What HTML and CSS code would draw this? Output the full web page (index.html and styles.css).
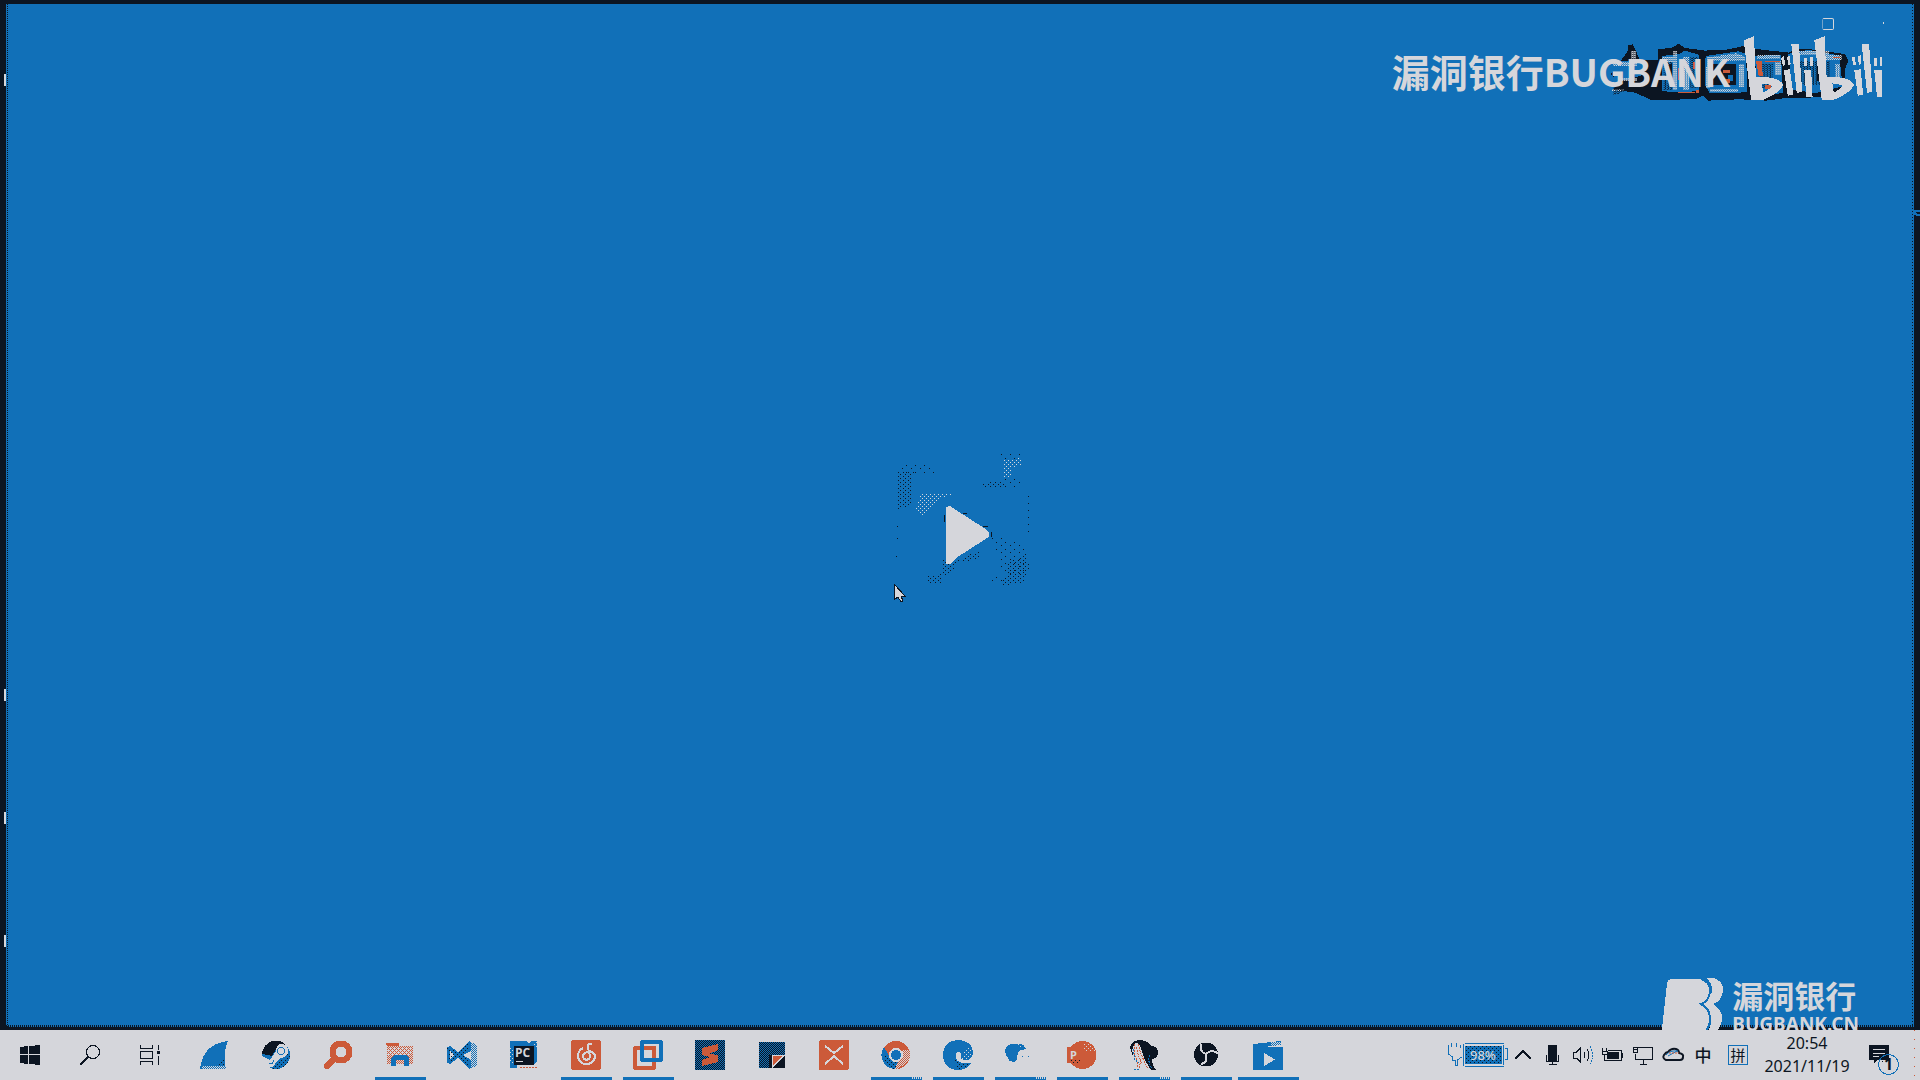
FILE: index.html
```html
<!DOCTYPE html>
<html lang="zh-CN">
<head>
<meta charset="utf-8">
<title>漏洞银行BUGBANK</title>
<link rel="stylesheet" href="styles.css">
</head>
<body>
<svg class="defs" width="0" height="0" aria-hidden="true">
  <defs>
    <pattern id="dark-dots" width="4" height="4" patternUnits="userSpaceOnUse"><path class="dark" d="M0 0h1v1H0zM2 2h1v1H2z"/></pattern>
    <pattern id="dark-dense" width="2" height="2" patternUnits="userSpaceOnUse"><path class="dark" d="M0 0h1v1H0zM1 1h1v1H1z"/></pattern>
    <pattern id="light-dots" width="4" height="4" patternUnits="userSpaceOnUse"><path class="light" d="M1 0h1v1H1zM3 2h1v1H3z"/></pattern>
    <pattern id="light-dense" width="2" height="2" patternUnits="userSpaceOnUse"><path class="light" d="M0 0h1v1H0zM1 1h1v1H1z"/></pattern>
    <pattern id="dark-big" width="15" height="12" patternUnits="userSpaceOnUse"><path class="dark" d="M0 0h3v3H0zM9 6h3v3H9z"/></pattern>
    <pattern id="dark-sparse" width="27" height="21" patternUnits="userSpaceOnUse"><path class="dark" d="M0 0h3v3H0zM15 9h3v3h-3z"/></pattern>
    <pattern id="light-big" width="12" height="12" patternUnits="userSpaceOnUse"><path class="light" d="M0 0h3v3H0zM6 6h3v3H6z"/></pattern>
    <pattern id="light-mesh" width="6" height="6" patternUnits="userSpaceOnUse"><path class="light" d="M0 0h3v3H0zM3 3h3v3H3z"/></pattern>
    <pattern id="dark-mesh" width="9" height="6" patternUnits="userSpaceOnUse"><path class="dark" d="M0 0h3v3H0zM5 3h3v3H5z"/></pattern>
  </defs>
</svg>

<main class="desktop">
  <section class="window" aria-label="视频"></section>

  <i class="mark mark-a"></i>
  <i class="mark mark-b"></i>
  <i class="mark mark-c"></i>
  <i class="mark mark-d"></i>
  <svg class="fish" viewBox="0 0 7 9"><path class="line-blue thick" d="M0 2l4 5h3M0 7l3-4h4"/></svg>

  <svg class="badge-art" viewBox="660 90 840 210" aria-hidden="true">
    <path class="dark" d="M720 150v-16l14-2 20 44 54 2V146l40-4 20-12 16 12 60 8 60-2 76-16 4 12 50 6 56 6 24-12 60 4 50 8 28 4 10 20-8 22-6 74-34 10-130 2-60 8-80-4-90 4-16-14-20 10-130 2-50-22-64-8 20-16-24-30 20-26z"/>
    <path class="blue" d="M672 184l34-4 46 4 20 8-6 28-34 12-50 10-10 38h-4v-18l12-20z"/>
    <path class="blue" d="M818 166l50-6 18-10 40 12v104l-44 8-62-6z"/>
    <path class="blue" d="M946 166l96-14 22 8 4 112-110 2-14-24z"/>
    <path class="blue" d="M1084 166l82-4 6 112-70 8-20-20zM1186 160l60-12 90 16 10 90-80 20-80-12z"/>
    <path fill="url(#light-mesh)" d="M676 182h70v12h-70zM728 150h14v30h-14zM820 170h40v12h-40zM850 150h12v116h-12zM880 168h18v96h-18zM950 170l86-12 24 10v12H960v80h-14zM1044 190h14v66h-14zM1096 162h68v12h-68zM1150 180h16v40h-16zM1206 150h100v14h-100zM1290 164h54v14h-54zM1324 190h14v46h-14zM672 262h36v6h-36zM700 230h46v10h-46zM960 262h80v8h-80z"/>
    <path fill="url(#dark-mesh)" d="M676 250l50-14v26l-50 20zM822 184h26v80h-26zM902 168h22v90h-22zM1104 190h40v70h-40zM1220 180h90v70h-90z"/>
    <path class="dark" d="M968 190h66v60h-66zM1072 196h20v40h-20zM1178 170h14v76h-14zM1270 190h12v50h-12zM840 190h8v60h-8z"/>
    <path class="blue" d="M980 200h12v16h-12zM1012 220h14v20h-14z"/>
    <path class="orange" d="M1093 180h17l3 44h-12zM996 208h20v6h-20zM998 234h18v10h-18zM1120 180h42v4h-42zM866 270h50v4h-50zM918 264h9v9h-9zM1318 168h20v4h-20zM866 200h4v36h-4zM910 184h4v20h-4zM1120 250h16v12h-16zM1214 180h4v10h-4z"/>
  </svg>
  <p class="watermark">漏洞银行BUGBANK</p>
  <svg class="bili" viewBox="660 90 840 210" role="img" aria-label="bilibili">
    <g class="light">
      <path d="M1057 120l30-12 6 118q70 0 80 24-10 24-60 44h-34zM1110 246l4 26q18-8 26-18-10-8-30-8z" fill-rule="evenodd"/>
      <path d="M1263 120l30-12 6 118q70 0 80 24-10 24-60 44h-34zM1316 246l4 26q18-8 26-18-10-8-30-8z" fill-rule="evenodd"/>
      <path d="M1166 172l8-6 5 26-7 2zM1184 168l8-4 2 26-7 2zM1174 208l18-4 10 74-16 4zM1196 130h22l10 140-16 4zM1234 172l8-2v24h-8zM1250 168h8v26h-8zM1234 208h20l4 76h-18z"/>
      <path d="M1372 172l8-6 5 26-7 2zM1390 168l8-4 2 26-7 2zM1380 208l18-4 8 74-16 4zM1401 130h22l10 140-16 4zM1438 172l8-2v24h-8zM1454 168h8v26h-8zM1438 208h22l2 76h-16z"/>
    </g>
    <path class="light" d="M1463 66h3v6h-3z"/>
  </svg>
  <button class="restore" aria-label="还原"></button>

  <button class="play" aria-label="播放">
    <svg viewBox="-15 -30 570 570">
      <path fill="url(#dark-big)" d="M84 125l68-3-30 18v84l-42 18zM324 162l80-10v20l-60 4zM222 374l10 30 44-20 50-22v28l-60 4-30 44h-28zM168 440l50-6v24h-50zM410 400l60-30 8 40-18 50-60 6-14 0 30-34z"/>
      <path fill="url(#dark-sparse)" d="M84 102h84l50 30H84zM380 66h80v20h-80zM400 148h56v28h-56zM470 180h12v140h-12zM360 320h50l60 30v90h-70zM336 456l40-16 20-8v20z"/>
      <path class="dark" d="M222 256h3v20h-3zM81 288h3v3h-3zM81 324h3v3h-3zM78 378h3v3h-3zM278 250h14v3h-14zM340 288h14v3h-14zM362 306h3v16h-3z"/>
      <path fill="url(#light-big)" d="M402 88l54-4v24l-30 4v30h-26zM150 192l106-3-50 20-48 45-24-12z"/>
      <path class="light" d="M228 232l12-4 18 12 99 66v18l-99 78-18 20h-12z" visibility="hidden"/>
      <path class="light" d="M228 232l12-4 18 12 84 54 15 12v15l-15 9-84 54-18 18h-12z"/>
    </svg>
  </button>
  <svg class="cursor" viewBox="0 0 13 20"><path class="pointer" d="M1 1v16l4-3 3 5 2-1-2-5h4z"/></svg>

  <div class="brand">
    <svg class="brand-logo" viewBox="0 0 66 60" aria-hidden="true">
      <path class="light" d="M1 60L7 5q1-4 5-4h28q12 2 11 15-1 11-11 10 11 4 9 18-2 12-8 16z"/>
      <path class="light" d="M46 0h8q10 4 9 13-1 10-10 13 10 6 9 16-2 11-13 18h-9q12-8 11-18 0-12-8-16 8-4 9-13 0-9-6-13z"/>
      <path class="line-split" d="M41 1q10 3 9 13-1 9-9 12 9 5 9 15 0 10-9 17"/>
    </svg>
    <div class="brand-text">
      <p class="brand-name">漏洞银行</p>
      <p class="brand-site">BUGBANK.CN</p>
    </div>
  </div>
</main>

<footer class="taskbar">
  <nav class="shell">
    <button aria-label="开始"><svg viewBox="0 0 30 30"><path class="dark" d="M5 7l8-1v8H5zM14 6l11-1v9H14zM5 15h8v9l-8-1zM14 15h11v10l-11-1z"/></svg></button>
    <button aria-label="搜索"><svg viewBox="0 0 30 30"><circle class="line-dark" cx="18" cy="12" r="6.500"/><path class="line-dark thick" d="M13 17l-8 8"/></svg></button>
    <button aria-label="任务视图"><svg viewBox="0 0 30 30"><path class="line-dark" d="M5.500 5v3.500h12V5M5.500 11.500h12v7h-12zM5.500 25v-3.500h12V25M23.500 5v5M23.500 16v9"/><path class="dark" d="M22 11h3v3h-3z"/></svg></button>
  </nav>
  <nav class="apps">
    <button aria-label="Wireshark"><svg viewBox="0 0 30 30"><path class="blue" d="M1 29C3 12 12 3 29 1c-4 8-4 18-2 28z"/><path fill="url(#light-dense)" d="M3 26h24v3H3z"/><path fill="url(#dark-dots)" d="M24 17l3 9H17z"/></svg></button>
    <button aria-label="Steam"><svg viewBox="0 0 30 30"><circle class="blue" cx="15" cy="15" r="14"/><path class="dark" d="M1 14A14 14 0 0 1 26 6q-8-4-11 3l-4 7z"/><path fill="url(#dark-dots)" d="M29 15A14 14 0 0 1 8 27l10-6 8-4V6z"/><path class="light" d="M1 16l8 4 6-9q0-7 6-7 6 1 6 7t-7 7l-6 5q-1 5-5 4-4 0-5-4l-4-2z"/><circle class="line-blue" cx="20" cy="11" r="3.500"/><path class="line-blue" d="M8 23q5 2 4-3"/></svg></button>
    <button aria-label="Everything"><svg viewBox="0 0 30 30"><circle class="ring" cx="18" cy="12" r="8.500"/><path class="ring-handle" d="M11 19l-7 7"/></svg></button>
    <button class="open" aria-label="文件资源管理器"><svg viewBox="0 0 30 30"><path class="orange" d="M1 3h13v3H2z"/><path class="orange" d="M2 6h26v18H2z"/><path fill="url(#light-dense)" d="M2 6h26v18H2z"/><path fill="url(#light-dots)" d="M3 7h24v8H3z"/><path class="blue" d="M6 26V18l3-3h12l3 3v8h-5v-6h-8v6z"/></svg></button>
    <button aria-label="Visual Studio"><svg viewBox="0 0 30 30"><path class="blue" d="M0 7l3-1 8 6L22 1l2 1v9l-8 4 8 5v8l-2 1-11-11-8 6-3-1zM3 11v8l4-4z" fill-rule="evenodd"/><path fill="url(#dark-dots)" d="M11 12L22 1v10l-6 4 6 5v9L11 18 3 24 0 7z"/><path class="blue" d="M24 2l6 3v20l-6 4z"/><path fill="url(#light-dense)" d="M24 2l6 3v20l-6 4z"/></svg></button>
    <button aria-label="PyCharm"><svg viewBox="0 0 30 30"><path class="blue" d="M1 1h16l3 3 2-3h6v20l-3 3H8v4H1z"/><path fill="url(#light-dots)" d="M1 8h4v16H1zM24 1h4v6h-4z"/><path class="dark" d="M5 6h20v19H5z"/><text class="pc-text" x="6" y="17">PC</text><path class="light" d="M7 21h7v1H7z"/><path class="line-orange dashed" d="M11 27.500h17"/></svg></button>
    <button class="open" aria-label="网易云音乐"><svg viewBox="0 0 30 30"><rect class="orange" width="30" height="30" rx="3"/><path class="line-light" d="M21 4q-5-1-4 4l2 8a3.500 3.500 0 1 1-5-3q6-4 10 2a8.500 8.500 0 1 1-12-7"/></svg></button>
    <button class="open" aria-label="VMware"><svg viewBox="0 0 30 30"><rect class="frame frame-orange" x="2" y="8" width="19" height="20" rx="1"/><rect class="frame frame-blue" x="9" y="2" width="19" height="18" rx="1"/><path class="orange" d="M12 6h11v4H12zM19 8h4v7h-4z"/></svg></button>
    <button aria-label="Sublime Text"><svg viewBox="0 0 30 30"><path class="blue" d="M0 0h30v30H0z"/><path fill="url(#dark-dense)" d="M0 0h30v30H0z"/><path class="orange" d="M7 8l16-4v6l-9 4 9 1v7L7 26v-6l8-3-8-2z"/></svg></button>
    <button aria-label="编辑器"><svg viewBox="0 0 30 30"><path class="blue" d="M2 2h26v26H2z"/><path fill="url(#dark-dense)" d="M2 2h26v26H2z"/><path class="dark" d="M12 15h16v13H12z"/><path class="light" d="M15 15h13L15 28z"/><path class="orange" d="M16 16h9l-9 9z"/></svg></button>
    <button aria-label="XMind"><svg viewBox="0 0 30 30"><rect class="orange" width="30" height="30" rx="2"/><path class="line-light" d="M6 6l9 7 9-7M6 24l9-8 9 8"/></svg></button>
    <button class="open stacked" aria-label="Chrome"><svg viewBox="0 0 30 30"><circle class="orange" cx="15" cy="15" r="14"/><path fill="url(#light-dense)" d="M21 10h8v10L17 29h-3z"/><path class="blue" d="M3 7l6 10 8 5-3 7A14 14 0 0 1 3 7z"/><path fill="url(#dark-dots)" d="M3 12l7 9 7 1-3 7A14 14 0 0 1 3 12z"/><circle class="light" cx="15" cy="15" r="7"/><circle class="blue" cx="15" cy="15" r="5"/></svg></button>
    <button class="open" aria-label="Edge"><svg viewBox="0 0 30 30"><path class="blue" d="M15 0q15 1 15 14-2 7-9 6-4-1-3-4 0-5-4-4-4 9 6 11h8q-4 7-13 7Q0 29 0 15 1 1 15 0z"/><path fill="url(#light-dots)" d="M26 4l4 10-8 7-4-2z"/><path fill="url(#dark-dots)" d="M12 20q5 4 16 3-5 7-14 6z"/></svg></button>
    <button class="open stacked" aria-label="钉钉"><svg viewBox="0 0 30 30"><path class="blue" d="M0 10q3-7 10-6 9-2 11 5l-5 1q-4 2-4 9l-3 3-5-1-1-4q-3-2-3-7z"/><path fill="url(#light-dots)" d="M4 5l16-1v4z"/><path class="blue" d="M17 16h1v1h-1zM23 16h1v1h-1z"/></svg></button>
    <button class="open" aria-label="PowerPoint"><svg viewBox="0 0 30 30"><path class="orange" d="M0 7h4A14 14 0 1 1 4 23H0z"/><path fill="url(#light-dots)" d="M17 2q11 4 12 13l-4-4h-8z"/><path fill="url(#dark-dots)" d="M4 19h10v4H4z"/><text class="ppt-text" x="3" y="19">P</text></svg></button>
    <button class="open stacked" aria-label="照片"><svg viewBox="0 0 30 30"><path class="dark" d="M1 8Q2 0 12 0q8 1 10 6 7 0 7 7-1 6-6 6 0 7 4 11h-9L8 20 4 16z"/><path class="light" d="M6 3q4-1 6 5 2 8 4 12l6 10H6l3-5-3-4-3-11z"/><path class="line-orange dashed" d="M6 4l-1 8 3 8M9 4l3 10 4 9 3 6M7 7l3 10 3 7M8 22l1 6M12 20l-2 9"/><path class="line-blue dashed" d="M4 9l2 11 4 3M21 15q-3 6 2 14M5 29h6"/></svg></button>
    <button class="open" aria-label="OBS Studio"><svg viewBox="0 0 30 30"><circle class="dark" cx="15" cy="14.500" r="12"/><path class="line-swirl" d="M10 4q-2 8 5 10M27 14q-5-6-12 0M10 24q7-1 5-10"/></svg></button>
    <button class="open wide" aria-label="电影和电视"><svg viewBox="0 0 30 30"><path class="blue" d="M0 4l28-3v4L11 7h19v23H0z"/><path fill="url(#light-dense)" d="M18 2h10v4H18z"/><path class="light" d="M11 13l11 6.500L11 26z"/></svg></button>
  </nav>
  <div class="tray">
    <svg class="power" viewBox="0 0 62 50" role="img" aria-label="98%">
      <path class="line-blue" d="M2.500 15v9l4 3v3h3v5h2v-5l4-3M5.500 17v-4M10.500 17v-4M14.500 15v3M17.500 14v22M19 13.500h39M19 36.500h39M57.500 15v20M59 18.500h2.500v11H59"/>
      <path class="blue" d="M19 16h37v18H19z"/><path fill="url(#dark-dots)" d="M19 16h37v18H19z"/>
      <text class="power-text" x="24" y="30">98%</text>
    </svg>
    <button class="tray-item" aria-label="显示隐藏的图标"><svg viewBox="0 0 30 30"><path class="line-dark thick" d="M7 19l8-8 8 8"/></svg></button>
    <button class="tray-item" aria-label="麦克风"><svg viewBox="0 0 30 30"><path class="dark" d="M10 5h9v16h-9z"/><path class="line-dark" d="M8.500 15v6.500h12V15M14.500 22v3M11 24.500h8"/></svg></button>
    <button class="tray-item" aria-label="音量"><svg viewBox="0 0 30 30"><path class="line-dark" d="M5.500 12v6h3l4 4V8l-4 4zM16 12q2 3 0 6M19 9q4 6 0 12"/><path class="line-blue dashed" d="M22 6q5 9 0 18"/></svg></button>
    <button class="tray-item" aria-label="电源"><svg viewBox="0 0 30 30"><path class="line-dark" d="M10 10.500h13v10H6V18M23 13.500h1.500v4H23M4 11.500h5v3H4zM4.500 8v3M8.500 8v3M6.500 15v5"/><path class="dark" d="M9 12h12v7H9z"/></svg></button>
    <button class="tray-item" aria-label="网络"><svg viewBox="0 0 30 30"><path class="line-dark" d="M9 7.500h15.500v12H7V14M15.500 20v4M12 24.500h7M5.500 7.500h4v5h-4zM5 9.500h4"/></svg></button>
    <button class="tray-item" aria-label="OneDrive"><svg class="smooth" viewBox="0 0 30 30"><path class="line-dark thick" d="M8 20q-4-2-2-5 2-3 4-3 3-4 8-3 3 1 3 4 5 1 4 4 0 3-3 3z"/><path class="line-blue" d="M8 15q4-5 12-4M10 16l9-5"/><path class="line-orange dashed" d="M11 13h10"/></svg></button>
    <button class="tray-item ime">中</button>
    <button class="tray-item ime-mode"><span>拼</span></button>
    <button class="clock"><time>20:54</time><time>2021/11/19</time></button>
    <button class="notice" aria-label="通知">
      <svg viewBox="0 0 32 40"><path class="dark" d="M1 10h20v15H9l-3 3v-3H1z"/><path class="line-light thin" d="M5 14.500h12M5 18.500h12M5 21.500h6"/><circle class="line-blue badge" cx="20.500" cy="29.500" r="10"/><path fill="url(#dark-dots)" d="M12 25l7-5 2 8h-9z"/><text class="notice-text" x="16" y="35">1</text></svg>
    </button>
    <div class="peek"></div>
  </div>
</footer>
</body>
</html>
```
FILE: styles.css
```css
:root {
  --blue: #1170b8;
  --dark: #0c1522;
  --light: #d5d6db;
  --orange: #cc5a39;
  --cjk: "Noto Sans CJK SC", "Noto Sans", sans-serif;
}

* { box-sizing: border-box; }

body {
  margin: 0;
  min-height: 100vh;
  display: flex;
  flex-direction: column;
  overflow: hidden;
  background: var(--dark);
  color: var(--dark);
  font-family: "Noto Sans", "Noto Sans CJK SC", sans-serif;
}

p { margin: 0; }

button {
  border: 0;
  padding: 0;
  background: none;
  color: inherit;
  font: inherit;
}

svg { display: block; fill: none; shape-rendering: crispEdges; }
.smooth { shape-rendering: auto; }
.defs { position: absolute; }

.blue { fill: var(--blue); }
.dark { fill: var(--dark); }
.light { fill: var(--light); }
.orange { fill: var(--orange); }
.line-blue { stroke: var(--blue); }
.line-dark { stroke: var(--dark); }
.line-orange { stroke: var(--orange); }
.line-light { stroke: var(--light); stroke-width: 2; }
.line-light.thin { stroke-width: 1; }
.line-swirl { stroke: var(--light); stroke-width: 2; }
.line-split { stroke: var(--blue); stroke-width: 2; }
.thick { stroke-width: 2; }
.dashed { stroke-dasharray: 2 1; }
.ring { stroke: var(--orange); stroke-width: 6; }
.ring-handle { stroke: var(--orange); stroke-width: 6; stroke-linecap: round; }
.frame { stroke-width: 4; }
.frame-blue { stroke: var(--blue); }
.frame-orange { stroke: var(--orange); }

/* Desktop */
.desktop {
  position: relative;
  flex: 1;
  display: flex;
  padding: 4px 6px 3px 6px;
  overflow: hidden;
}

.window {
  flex: 1;
  background:
    repeating-linear-gradient(var(--dark) 0 1px, transparent 1px 2px) 1px 0 / 1px 100% no-repeat,
    repeating-linear-gradient(var(--dark) 0 1px, transparent 1px 3px) calc(100% - 1px) 0 / 1px 100% no-repeat,
    repeating-linear-gradient(90deg, var(--dark) 0 1px, transparent 1px 2px) 0 100% / 100% 2px no-repeat,
    var(--blue);
}

.mark {
  position: absolute;
  left: 4px;
  width: 2px;
  height: 12px;
  background: var(--light);
}
.mark-a { top: 74px; }
.mark-b { top: 689px; }
.mark-c { top: 812px; }
.mark-d { top: 935px; }

.fish {
  position: absolute;
  right: 0;
  top: 208px;
  width: 7px;
  height: 9px;
}

.badge-art, .bili {
  position: absolute;
  right: 24px;
  top: 30px;
  width: 289px;
  height: 72px;
  overflow: visible;
}

.watermark {
  position: absolute;
  right: 190px;
  top: 43px;
  color: var(--light);
  font: 700 38px/56px var(--cjk);
  white-space: nowrap;
}

.restore {
  position: absolute;
  right: 86px;
  top: 18px;
  width: 12px;
  height: 12px;
  border: 1px solid var(--light);
  border-left-style: dotted;
  border-radius: 2px;
}

.play {
  position: absolute;
  left: 50%;
  top: 50%;
  transform: translate(-50%, -50%);
}
.play svg { width: 190px; height: 190px; }

.cursor {
  position: absolute;
  left: calc(50% - 67px);
  top: calc(50% + 68px);
  width: 13px;
  height: 20px;
}
.pointer { fill: var(--light); stroke: var(--dark); }

.brand {
  position: absolute;
  right: 61px;
  bottom: -8px;
  display: flex;
  align-items: flex-start;
  gap: 6px;
  color: var(--light);
}
.brand-logo { width: 66px; height: 60px; }
.brand-name { font: 700 31px/34px var(--cjk); }
.brand-site { font: 700 19px/24px "Noto Sans", sans-serif; }

/* Taskbar */
.taskbar {
  position: relative;
  display: flex;
  height: 50px;
  background: var(--light);
}

.shell, .apps, .tray { display: flex; }
.apps { margin-left: 3px; }
.tray { margin-left: auto; align-items: stretch; }

.shell button, .apps button, .tray-item {
  position: relative;
  display: flex;
  align-items: center;
  justify-content: center;
}
.shell button { width: 60px; }
.apps button { width: 62px; }
.shell svg, .apps svg, .tray-item svg { width: 30px; height: 30px; }

.open::after {
  content: "";
  position: absolute;
  left: 6px;
  right: 5px;
  bottom: 0;
  height: 3px;
  background: var(--blue);
}
.stacked::after {
  background:
    repeating-linear-gradient(90deg, var(--light) 0 1px, transparent 1px 2px) 100% 0 / 10px 2px no-repeat,
    var(--blue);
}
.wide::after { left: 1px; right: 0; }

.pc-text { font: 700 12px "Open Sans", sans-serif; fill: var(--light); }
.ppt-text { font: 700 11px "Open Sans", sans-serif; fill: var(--light); }

.power { width: 62px; height: 50px; }
.power-text { font: 500 13px "Noto Sans", sans-serif; fill: var(--light); }
.tray-item { width: 30px; }
.ime { font: 500 17px/50px var(--cjk); }
.ime-mode { width: 40px; }
.ime-mode span {
  width: 20px;
  height: 20px;
  border: 1px solid var(--blue);
  font: 15px/17px var(--cjk);
}

.clock {
  display: flex;
  flex-direction: column;
  align-items: center;
  justify-content: center;
  width: 98px;
  font-size: 16px;
  line-height: 23px;
}

.notice {
  display: flex;
  align-items: center;
  justify-content: center;
  width: 56px;
}
.notice svg { width: 32px; height: 40px; }
.notice-text { font: 700 16px "Noto Sans", sans-serif; fill: var(--dark); }

.peek {
  width: 8px;
  background: repeating-linear-gradient(var(--orange) 0 1px, transparent 1px 9px) 2px 0 / 1px 100% no-repeat;
}
```
